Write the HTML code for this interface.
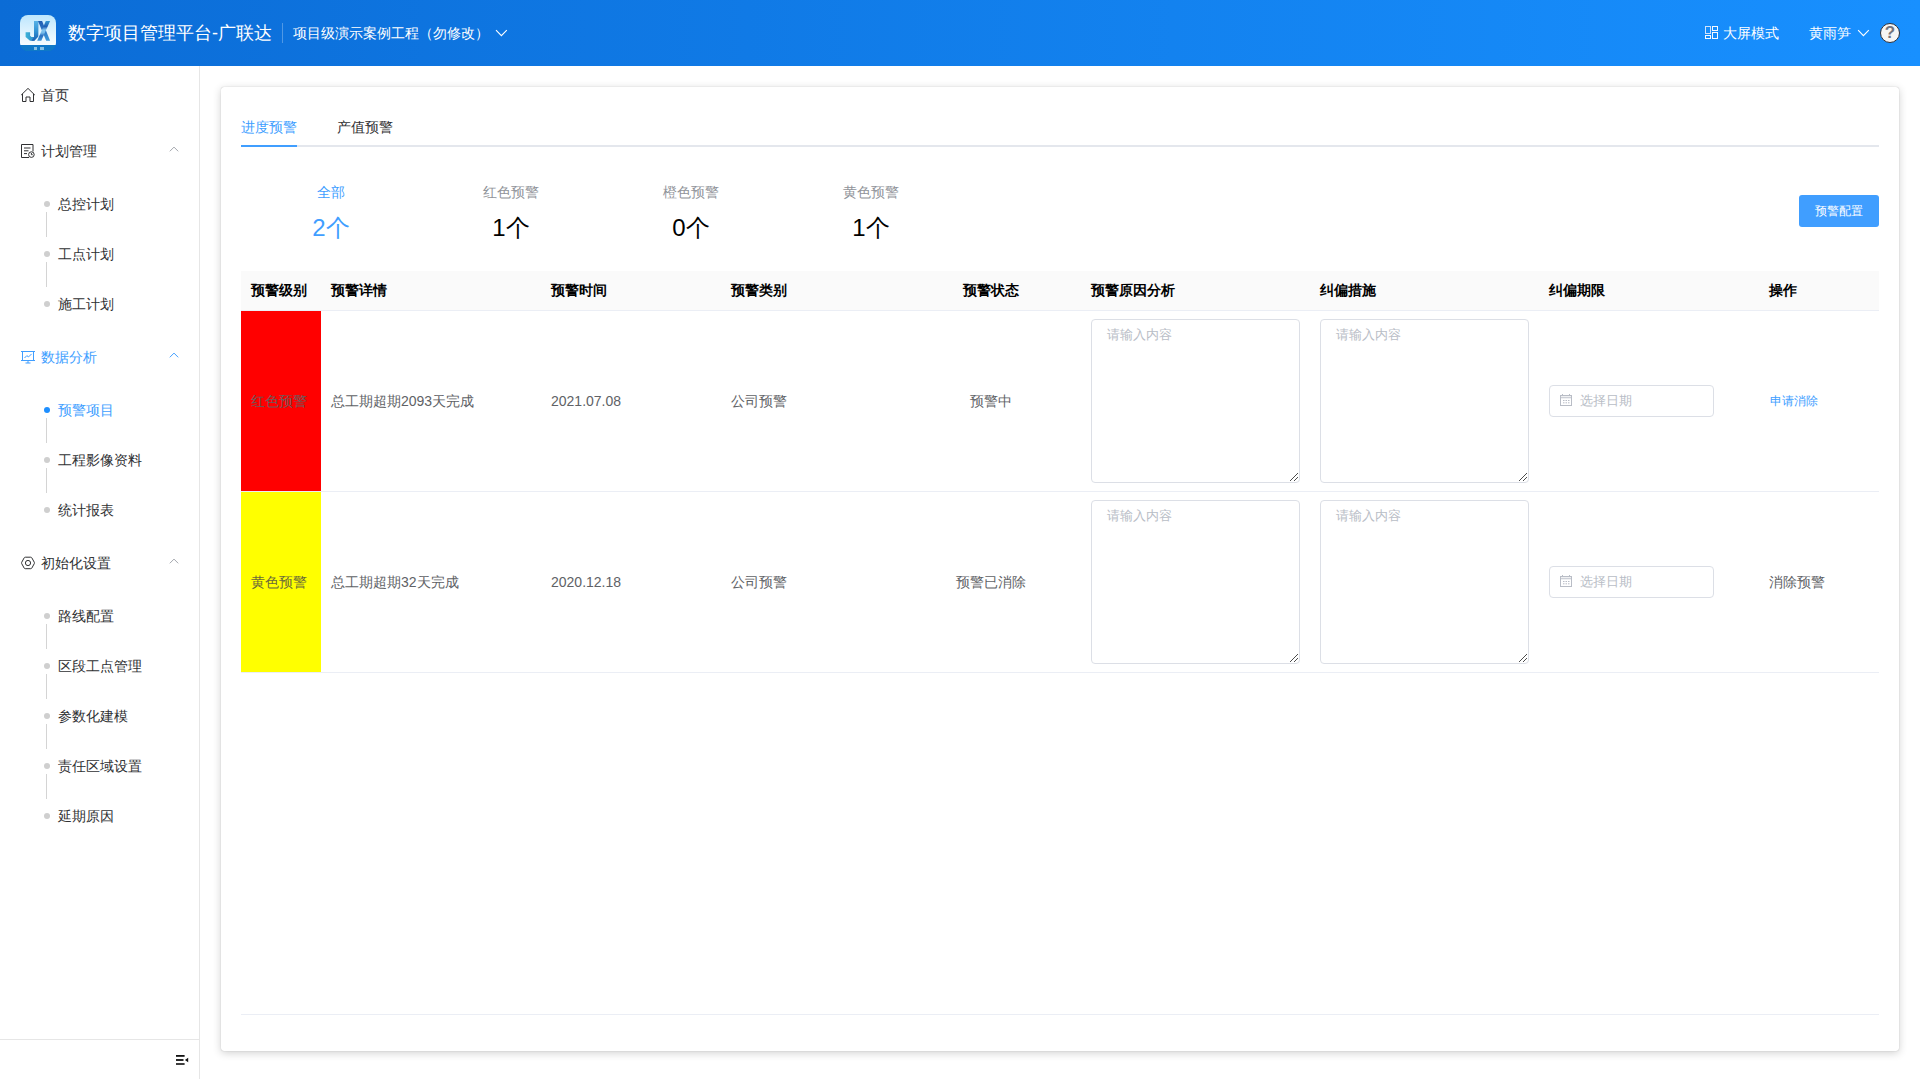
<!DOCTYPE html>
<html lang="zh">
<head>
<meta charset="utf-8">
<title>数字项目管理平台-广联达</title>
<style>
*{box-sizing:border-box;margin:0;padding:0}
html,body{width:1920px;height:1079px;overflow:hidden;background:#fff}
body{font-family:"Liberation Sans",sans-serif;font-size:14px;color:#303133;position:relative}
.abs{position:absolute}
.j{display:inline-block;text-align:justify;text-align-last:justify;white-space:nowrap;vertical-align:baseline}
.jb{text-align:justify;text-align-last:justify}
/* header */
#hd{position:absolute;left:0;top:0;width:1920px;height:66px;background:linear-gradient(90deg,#0b6cd6 0%,#1890ff 100%);color:#fff}
#logo{position:absolute;left:20px;top:15px;width:36px;height:36px;border-radius:8px;overflow:hidden;background:#0f79c8}
#logo .top{position:absolute;left:0;top:0;width:36px;height:30px;background:linear-gradient(180deg,#bde6fd 0%,#e4f5fe 65%,#f6fdff 100%)}
#logo .bar{position:absolute;left:0;top:30px;width:36px;height:6px;background:#0f79c8}
#logo .bar i{position:absolute;left:13.500px;top:1.500px;width:3px;height:3.500px;background:#86c0e4}
#logo .bar b{position:absolute;left:20px;top:1.500px;width:3.700px;height:3.500px;background:#86c0e4}
#title{position:absolute;left:68px;top:19px;height:28px;line-height:28px;font-size:18px;white-space:nowrap}
#sep{position:absolute;left:282px;top:23px;width:1px;height:20px;background:rgba(255,255,255,.28)}
#sub{position:absolute;left:293px;top:22px;height:22px;line-height:22px;font-size:14px;white-space:nowrap}
.hr{position:absolute;top:22px;height:22px;line-height:22px;font-size:14px;white-space:nowrap}
/* sidebar */
#sb{position:absolute;left:0;top:66px;width:200px;height:1013px;border-right:1px solid #e6e6e6;background:#fff}
#sbft{position:absolute;left:0;top:1039px;width:199px;height:1px;background:#e6e6e6}
.mi{position:absolute;left:0;width:199px;height:56px;line-height:56px;font-size:14px;color:#303133;white-space:nowrap}
.mi svg.ic{position:absolute;left:21px;top:21px;width:14px;height:14px}
.mi span{position:absolute;left:41px;top:0}
.mi svg.ar{position:absolute;left:169px;top:23px;width:10px;height:6px}
.si{position:absolute;left:0;width:199px;height:50px;line-height:50px;font-size:14px;color:#303133;white-space:nowrap}
.si i{position:absolute;left:44px;top:22px;width:6px;height:6px;border-radius:50%;background:#cfcfcf}
.si u{position:absolute;left:46px;top:33px;width:1px;height:25px;background:#d4d4d4}
.si span{position:absolute;left:58px;top:0}
.on{color:#409eff}
.si.on i{background:#1e8fff}
/* card */
#card{position:absolute;left:221px;top:87px;width:1678px;height:964px;background:#fff;border-radius:3px;box-shadow:0 2px 8px rgba(0,0,0,.19),0 0 1px rgba(0,0,0,.3)}
.tab{position:absolute;top:116px;height:22px;line-height:22px;font-size:14px;color:#303133;white-space:nowrap}
.tab.on{color:#409eff}
#tabline{position:absolute;left:241px;top:145px;width:1638px;height:2px;background:#e4e7ed}
#tabact{position:absolute;left:241px;top:145px;width:56px;height:2px;background:#409eff}
.st{position:absolute;width:180px;text-align:center;white-space:nowrap}
.st .l{position:absolute;left:0;top:181px;width:180px;height:22px;line-height:22px;font-size:14px;color:#909399}
.st .n{position:absolute;left:0;top:211px;width:180px;height:34px;line-height:34px;font-size:24px;color:#000}
.st.on .l,.st.on .n{color:#409eff}
#btn{position:absolute;left:1799px;top:195px;width:80px;height:32px;line-height:32px;border-radius:3px;background:#409eff;color:#fff;font-size:12px;text-align:center}
/* table */
#th{position:absolute;left:241px;top:271px;width:1638px;height:40px;background:#fafafa;border-bottom:1px solid #ebeef5}
.h{position:absolute;top:271px;height:39px;line-height:39px;font-size:14px;font-weight:bold;color:#000;white-space:nowrap}
.rb{position:absolute;left:241px;width:1638px;height:1px;background:#ebeef5}
.lv{position:absolute;left:241px;width:80px;height:180px;line-height:180px;text-align:left;padding-left:10px;font-size:14px;white-space:nowrap}
.c{position:absolute;height:24px;line-height:24px;font-size:14px;color:#606266;white-space:nowrap}
.ta{position:absolute;width:209px;height:164px;border:1px solid #dcdfe6;border-radius:4px;background:#fff}
.ta span{position:absolute;left:15px;top:5px;height:20px;line-height:20px;font-size:13px;color:#b8bdc6;white-space:nowrap}
.ta svg{position:absolute;right:0;bottom:0;width:10px;height:10px}
.dt{position:absolute;left:1549px;width:165px;height:32px;border:1px solid #dcdfe6;border-radius:4px;background:#fff}
.dt span{position:absolute;left:30px;top:4px;height:22px;line-height:22px;font-size:13px;color:#b8bdc6;white-space:nowrap}
.dt svg{position:absolute;left:10px;top:8px;width:12px;height:12px}
</style>
</head>
<body>
<!-- HEADER -->
<div id="hd">
  <div id="logo">
    <div class="top"></div>
    <svg class="abs" style="left:0;top:0" width="36" height="36" viewBox="0 0 36 36">
      <defs>
        <linearGradient id="lg1" x1="0" y1="0" x2="0" y2="1"><stop offset="0" stop-color="#58b2e6"/><stop offset=".55" stop-color="#2f8fd2"/><stop offset="1" stop-color="#1c60b3"/></linearGradient>
        <linearGradient id="lg3" x1="0" y1="0" x2="1" y2="0"><stop offset="0" stop-color="#3cb4d8"/><stop offset="1" stop-color="#2a78c4"/></linearGradient>
        <linearGradient id="lg2" x1="0" y1="0" x2="0" y2="1"><stop offset="0" stop-color="#1f5cb3"/><stop offset=".45" stop-color="#2a74c4"/><stop offset="1" stop-color="#3e9ad9"/></linearGradient>
        <linearGradient id="lg4" x1="0" y1="0" x2="0" y2="1"><stop offset="0" stop-color="#3196d2"/><stop offset=".28" stop-color="#1f5fb5"/><stop offset=".45" stop-color="#84c6ef"/><stop offset=".6" stop-color="#74bbea"/><stop offset=".74" stop-color="#2a6fc0"/><stop offset="1" stop-color="#3f97d8"/></linearGradient>
      </defs>
      <path d="M5.600 17.200h4.500v3.600l1.400 1.100h2.500V6h4.200v15.500l-3.900 4.200h-4.300l-4.400-3.600z" fill="url(#lg3)"/>
      <path d="M14 6h4.200v15.500l-3.900 4.200h-3l2.700-3.800z" fill="url(#lg1)"/>
      <path d="M18 6h4.100l8 19.800h-3.900z" fill="url(#lg2)"/>
      <path d="M25.800 6h4.300l-8.800 19.800h-4.100z" fill="url(#lg4)"/>
    </svg>
    <div class="bar"><i></i><b></b></div>
  </div>
  <div id="title" class="jb" style="width:204px">数字项目管理平台-广联达</div>
  <div id="sep"></div>
  <div id="sub" class="jb" style="width:196px">项目级演示案例工程（勿修改）</div>
  <svg class="abs" style="left:495px;top:29px" width="13" height="8" viewBox="0 0 13 8"><path d="M1 1.200L6.400 6.600 11.800 1.200" fill="none" stroke="#fff" stroke-width="1.100"/></svg>
  <svg class="abs" style="left:1705px;top:26px" width="13" height="13" viewBox="0 0 13 13"><g fill="none" stroke="#f4f9ff" stroke-width="1"><rect x=".5" y=".5" width="5" height="7" stroke="#cfe2fb"/><rect x="7.500" y=".5" width="5" height="4"/><rect x=".5" y="9.500" width="5" height="3"/><rect x="7.500" y="6.500" width="5" height="6"/></g></svg>
  <div class="hr jb" style="left:1723px;width:56px">大屏模式</div>
  <div class="hr jb" style="left:1809px;width:42px">黄雨笋</div>
  <svg class="abs" style="left:1857px;top:29px" width="13" height="8" viewBox="0 0 13 8"><path d="M1.100 1.200L6.400 6.600 11.800 1.200" fill="none" stroke="#fff" stroke-width="1.100"/></svg>
  <div class="abs" style="left:1880px;top:23px;width:20px;height:20px;border-radius:50%;background:#f5f5f5;border:1.500px solid #2f3038;color:#74747c;font-size:17px;font-weight:bold;line-height:17px;text-align:center">?</div>
</div>

<!-- SIDEBAR -->
<div id="sb"></div>
<div id="sbft"></div>
<svg class="abs" style="left:176px;top:1054px" width="13" height="12" viewBox="0 0 13 12"><g fill="#111"><rect x="0" y="1" width="8.600" height="1.800"/><rect x="0" y="5.100" width="7.500" height="1.800"/><rect x="0" y="9.100" width="8.600" height="1.800" fill="#2a2a2a"/><path d="M12.200 3.700v4.600L8.900 6z"/></g></svg>

<div class="mi" style="top:67px">
  <svg class="ic" viewBox="0 0 14 14"><path d="M.2 7L7 .4 13.800 7M1.500 6v7.500h3.500V9h4v4.500h3.500V6" fill="none" stroke="#303133" stroke-width="1"/></svg>
  <span class="jb" style="width:28px">首页</span>
</div>
<div class="mi" style="top:123px">
  <svg class="ic" viewBox="0 0 14 14"><g fill="none" stroke="#303133" stroke-width="1"><path d="M8 13.500H.5V.5h11.500v7"/><path d="M3 4h6.500M3 6.800h4.500M3 9.600h3"/><circle cx="10.400" cy="10.600" r="2.800"/><path d="M10.400 9v1.700h1.300"/></g></svg>
  <span class="jb" style="width:56px">计划管理</span>
  <svg class="ar" viewBox="0 0 10 6"><path d="M.8 5.300L5 1.100l4.200 4.200" fill="none" stroke="#a3a6ad" stroke-width="1"/></svg>
</div>
<div class="si" style="top:179px"><i></i><u></u><span class="jb" style="width:56px">总控计划</span></div>
<div class="si" style="top:229px"><i></i><u></u><span class="jb" style="width:56px">工点计划</span></div>
<div class="si" style="top:279px"><i></i><span class="jb" style="width:56px">施工计划</span></div>

<div class="mi on" style="top:329px">
  <svg class="ic" viewBox="0 0 14 14"><g fill="none" stroke="#409eff" stroke-width="1"><path d="M0 1.500h14M0 10.500h14M1.500 1.500v9M12.500 1.500v9M7 10.500v2.500M4.500 13h5"/><path d="M3.500 8l2.300-2.300 1.800 1.200 3-3"/></g></svg>
  <span class="jb" style="width:56px">数据分析</span>
  <svg class="ar" viewBox="0 0 10 6"><path d="M.8 5.300L5 1.100l4.200 4.200" fill="none" stroke="#409eff" stroke-width="1"/></svg>
</div>
<div class="si on" style="top:385px"><i></i><u></u><span class="jb" style="width:56px">预警项目</span></div>
<div class="si" style="top:435px"><i></i><u></u><span class="jb" style="width:84px">工程影像资料</span></div>
<div class="si" style="top:485px"><i></i><span class="jb" style="width:56px">统计报表</span></div>

<div class="mi" style="top:535px">
  <svg class="ic" viewBox="0 0 14 14"><g fill="none" stroke="#303133" stroke-width="1"><path d="M4.300 1.200h5.400c.5 0 .9.200 1.100.6l2.500 4.500c.2.400.2.900 0 1.300l-2.500 4.500c-.2.400-.6.600-1.100.6H4.300c-.5 0-.9-.2-1.100-.6L.7 7.600c-.2-.4-.2-.9 0-1.300l2.500-4.500c.2-.4.600-.6 1.100-.6z"/><circle cx="7" cy="7" r="2.600"/></g></svg>
  <span class="jb" style="width:70px">初始化设置</span>
  <svg class="ar" viewBox="0 0 10 6"><path d="M.8 5.300L5 1.100l4.200 4.200" fill="none" stroke="#a3a6ad" stroke-width="1"/></svg>
</div>
<div class="si" style="top:591px"><i></i><u></u><span class="jb" style="width:56px">路线配置</span></div>
<div class="si" style="top:641px"><i></i><u></u><span class="jb" style="width:84px">区段工点管理</span></div>
<div class="si" style="top:691px"><i></i><u></u><span class="jb" style="width:70px">参数化建模</span></div>
<div class="si" style="top:741px"><i></i><u></u><span class="jb" style="width:84px">责任区域设置</span></div>
<div class="si" style="top:791px"><i></i><span class="jb" style="width:56px">延期原因</span></div>

<!-- CARD -->
<div id="card"></div>
<div class="tab on jb" style="left:241px;width:56px">进度预警</div>
<div class="tab jb" style="left:337px;width:56px">产值预警</div>
<div id="tabline"></div><div id="tabact"></div>

<div class="st on" style="left:241px;top:0"><div class="l"><span class="j" style="width:28px">全部</span></div><div class="n">2个</div></div>
<div class="st" style="left:421px;top:0"><div class="l"><span class="j" style="width:56px">红色预警</span></div><div class="n">1个</div></div>
<div class="st" style="left:601px;top:0"><div class="l"><span class="j" style="width:56px">橙色预警</span></div><div class="n">0个</div></div>
<div class="st" style="left:781px;top:0"><div class="l"><span class="j" style="width:56px">黄色预警</span></div><div class="n">1个</div></div>
<div id="btn"><span class="j" style="width:48px">预警配置</span></div>

<!-- TABLE -->
<div id="th"></div>
<div class="h jb" style="left:251px;width:56px">预警级别</div>
<div class="h jb" style="left:331px;width:56px">预警详情</div>
<div class="h jb" style="left:551px;width:56px">预警时间</div>
<div class="h jb" style="left:731px;width:56px">预警类别</div>
<div class="h" style="left:901px;width:180px;text-align:center"><span class="j" style="width:56px">预警状态</span></div>
<div class="h jb" style="left:1091px;width:84px">预警原因分析</div>
<div class="h jb" style="left:1320px;width:56px">纠偏措施</div>
<div class="h jb" style="left:1549px;width:56px">纠偏期限</div>
<div class="h jb" style="left:1769px;width:28px">操作</div>

<!-- row 1 -->
<div class="lv" style="top:311px;background:#ff0000;color:#6f5a5c"><span class="j" style="width:56px">红色预警</span></div>
<div class="c jb" style="left:331px;top:389px;width:143.15px">总工期超期2093天完成</div>
<div class="c" style="left:551px;top:389px">2021.07.08</div>
<div class="c jb" style="left:731px;top:389px;width:56.0px">公司预警</div>
<div class="c" style="left:901px;top:389px;width:180px;text-align:center"><span class="j" style="width:42.0px">预警中</span></div>
<div class="ta" style="left:1091px;top:319px"><span class="jb" style="width:65px">请输入内容</span><svg viewBox="0 0 10 10" shape-rendering="crispEdges"><g fill="#4d4d4d"><rect x="1" y="8" width="1" height="1"/><rect x="2" y="7" width="1" height="1"/><rect x="3" y="6" width="1" height="1"/><rect x="4" y="5" width="1" height="1"/><rect x="5" y="4" width="1" height="1"/><rect x="6" y="3" width="1" height="1"/><rect x="7" y="2" width="1" height="1"/><rect x="8" y="1" width="1" height="1"/><rect x="5" y="8" width="1" height="1"/><rect x="6" y="7" width="1" height="1"/><rect x="7" y="6" width="1" height="1"/><rect x="8" y="5" width="1" height="1"/></g></svg></div>
<div class="ta" style="left:1320px;top:319px"><span class="jb" style="width:65px">请输入内容</span><svg viewBox="0 0 10 10" shape-rendering="crispEdges"><g fill="#4d4d4d"><rect x="1" y="8" width="1" height="1"/><rect x="2" y="7" width="1" height="1"/><rect x="3" y="6" width="1" height="1"/><rect x="4" y="5" width="1" height="1"/><rect x="5" y="4" width="1" height="1"/><rect x="6" y="3" width="1" height="1"/><rect x="7" y="2" width="1" height="1"/><rect x="8" y="1" width="1" height="1"/><rect x="5" y="8" width="1" height="1"/><rect x="6" y="7" width="1" height="1"/><rect x="7" y="6" width="1" height="1"/><rect x="8" y="5" width="1" height="1"/></g></svg></div>
<div class="dt" style="top:385px"><svg viewBox="0 0 12 12"><g fill="none" stroke="#b9bdc6" stroke-width="1"><rect x=".5" y="1.500" width="11" height="10"/><path d="M2.500 0v2M9.500 0v2"/><path d="M1 3.500h10" stroke="#cdd0d7" stroke-width="1.600"/><path d="M3 6.500h6.500M3 8.800h6.500" stroke-dasharray="1.500 1"/></g></svg><span class="jb" style="width:52px">选择日期</span></div>
<div class="c jb" style="left:1770px;top:389px;font-size:12px;color:#409eff;width:48.0px">申请消除</div>
<div class="rb" style="top:491px"></div>

<!-- row 2 -->
<div class="lv" style="top:492px;background:#ffff00;color:#6b6a3a"><span class="j" style="width:56px">黄色预警</span></div>
<div class="c jb" style="left:331px;top:570px;width:127.57px">总工期超期32天完成</div>
<div class="c" style="left:551px;top:570px">2020.12.18</div>
<div class="c jb" style="left:731px;top:570px;width:56.0px">公司预警</div>
<div class="c" style="left:901px;top:570px;width:180px;text-align:center"><span class="j" style="width:70.0px">预警已消除</span></div>
<div class="ta" style="left:1091px;top:500px"><span class="jb" style="width:65px">请输入内容</span><svg viewBox="0 0 10 10" shape-rendering="crispEdges"><g fill="#4d4d4d"><rect x="1" y="8" width="1" height="1"/><rect x="2" y="7" width="1" height="1"/><rect x="3" y="6" width="1" height="1"/><rect x="4" y="5" width="1" height="1"/><rect x="5" y="4" width="1" height="1"/><rect x="6" y="3" width="1" height="1"/><rect x="7" y="2" width="1" height="1"/><rect x="8" y="1" width="1" height="1"/><rect x="5" y="8" width="1" height="1"/><rect x="6" y="7" width="1" height="1"/><rect x="7" y="6" width="1" height="1"/><rect x="8" y="5" width="1" height="1"/></g></svg></div>
<div class="ta" style="left:1320px;top:500px"><span class="jb" style="width:65px">请输入内容</span><svg viewBox="0 0 10 10" shape-rendering="crispEdges"><g fill="#4d4d4d"><rect x="1" y="8" width="1" height="1"/><rect x="2" y="7" width="1" height="1"/><rect x="3" y="6" width="1" height="1"/><rect x="4" y="5" width="1" height="1"/><rect x="5" y="4" width="1" height="1"/><rect x="6" y="3" width="1" height="1"/><rect x="7" y="2" width="1" height="1"/><rect x="8" y="1" width="1" height="1"/><rect x="5" y="8" width="1" height="1"/><rect x="6" y="7" width="1" height="1"/><rect x="7" y="6" width="1" height="1"/><rect x="8" y="5" width="1" height="1"/></g></svg></div>
<div class="dt" style="top:566px"><svg viewBox="0 0 12 12"><g fill="none" stroke="#b9bdc6" stroke-width="1"><rect x=".5" y="1.500" width="11" height="10"/><path d="M2.500 0v2M9.500 0v2"/><path d="M1 3.500h10" stroke="#cdd0d7" stroke-width="1.600"/><path d="M3 6.500h6.500M3 8.800h6.500" stroke-dasharray="1.500 1"/></g></svg><span class="jb" style="width:52px">选择日期</span></div>
<div class="c jb" style="left:1769px;top:570px;width:56.0px">消除预警</div>
<div class="rb" style="top:672px"></div>

<div class="rb" style="top:1014px"></div>
</body>
</html>
